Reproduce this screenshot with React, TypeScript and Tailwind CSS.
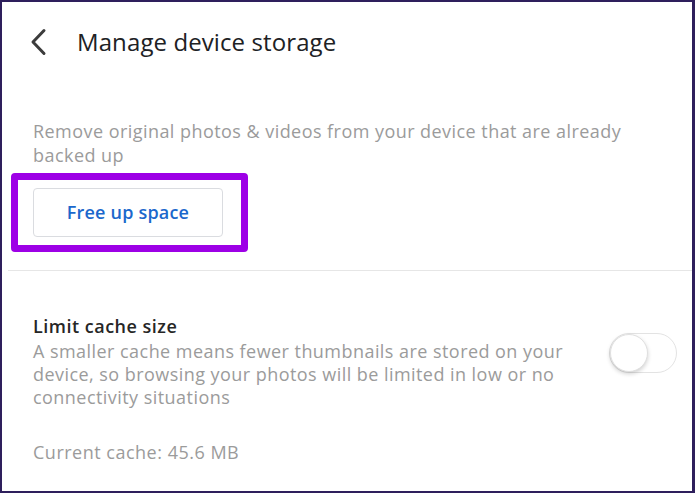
export default function App() {
  return (
    <div
      className="h-[493px] w-[695px] overflow-hidden border-b-2 border-l-2 border-r-[3px] border-t-2 border-[#2e1f5c] bg-white"
      style={{ fontFamily: "'Open Sans', Roboto, sans-serif" }}
    >
      <header className="flex h-[80px] items-center">
        <svg
          className="ml-[27px] h-[28px] w-[20px]"
          viewBox="0 0 20 28"
          fill="none"
          stroke="#3c3c3c"
          strokeWidth="3"
          strokeLinecap="round"
          strokeLinejoin="round"
        >
          <path d="M15 2.5 4 14l11 11.5" />
        </svg>
        <h1 className="ml-[28px] text-[24px] leading-none tracking-[0.1px] text-[#202124]">
          Manage device storage
        </h1>
      </header>

      <section className="pl-[31px]">
        <p className="mt-[37px] w-[632px] text-[18px] leading-[24px] tracking-[0.45px] text-[#9b9b9b]">
          Remove original photos &amp; videos from your device that are already backed up
        </p>
        <div className="relative mt-[21px] w-[190px]">
          <button className="flex h-[49px] w-[190px] items-center justify-center rounded-[4px] border border-[#dadce0] bg-white text-[18px] font-semibold tracking-[0.2px] text-[#1b68cc]">
            Free up space
          </button>
          <span className="pointer-events-none absolute -bottom-[15px] -left-[22px] -right-[25px] -top-[15px] rounded-[4px] border-[7px] border-[#9d00e6]" />
        </div>
      </section>

      <div className="ml-[6px] mt-[33px] h-px bg-[#e6e6e6]" />

      <section className="flex items-start justify-between pl-[31px] pr-[15px]">
        <div className="mt-[43px]">
          <h2 className="text-[18px] font-semibold leading-[24px] tracking-[0.5px] text-[#262626]">Limit cache size</h2>
          <p className="mt-[2px] w-[575px] text-[18px] leading-[23px] tracking-[0.45px] text-[#9b9b9b]">
            A smaller cache means fewer thumbnails are stored on your device, so browsing your photos will be limited in low or no connectivity situations
          </p>
          <p className="mt-[31px] text-[18px] leading-[24px] tracking-[0.5px] text-[#9b9b9b]">Current cache: 45.6 MB</p>
        </div>
        <div className="relative mt-[62px] h-[40px] w-[68px] rounded-full border border-[#e3e3e3] bg-white">
          <span className="absolute left-0 top-0 h-[38px] w-[38px] rounded-full border border-[#e0e0e0] bg-white shadow-[0_2px_4px_rgba(0,0,0,0.18)]" />
        </div>
      </section>
    </div>
  );
}
